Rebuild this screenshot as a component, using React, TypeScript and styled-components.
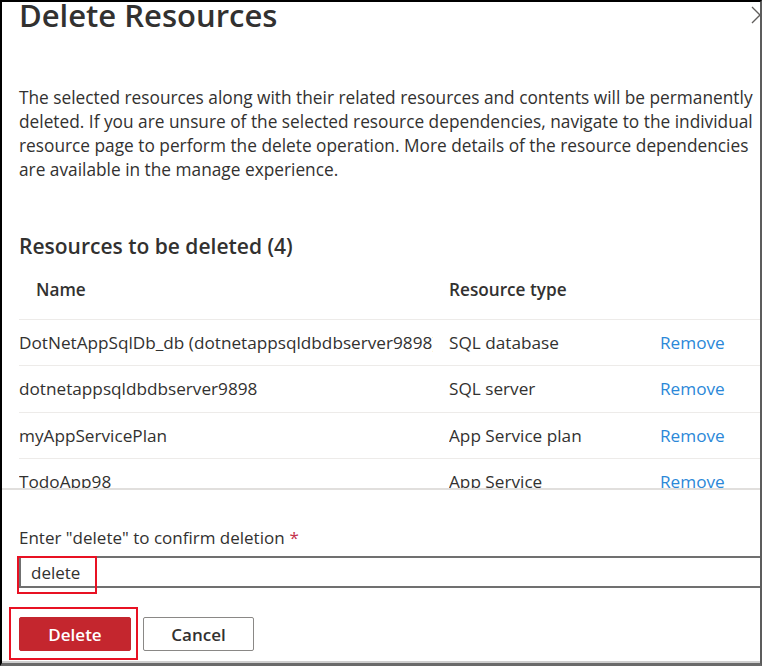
import React from "react";
import styled, { createGlobalStyle } from "styled-components";

const Global = createGlobalStyle`
  html, body { margin: 0; padding: 0; background: #fff; }
  body { font-family: "Open Sans", "Noto Sans", Arial, sans-serif; color: #323130; }
  * { box-sizing: border-box; }
`;

const Frame = styled.div`
  width: 762px;
  height: 666px;
  border-left: 2px solid #000;
  border-top: 2px solid #000;
  border-right: 2px solid #5c5c5c;
  border-bottom: 3px solid #6a6a6a;
  overflow: hidden;
  display: flex;
  flex-direction: column;
  background: #fff;
`;

const Content = styled.div`
  flex: 1 1 auto;
  min-height: 0;
  overflow: hidden;
  padding-left: 17px;
`;

const Header = styled.div`
  display: flex;
  justify-content: space-between;
  align-items: flex-start;
`;

const Title = styled.h1`
  margin: 0;
  font-size: 31px;
  line-height: 26px;
  font-weight: 600;
  color: #323130;
  white-space: nowrap;
`;

const CloseButton = styled.button`
  border: none;
  background: none;
  padding: 0;
  margin: 4px -9px 0 0;
  width: 18px;
  height: 18px;
  color: #605e5c;
  display: flex;
`;

const Description = styled.p`
  margin: 58px 0 0 0;
  font-size: 17.3px;
  line-height: 24px;
  color: #323130;
  white-space: nowrap;
`;

const SectionTitle = styled.h2`
  margin: 50px 0 0 0;
  font-size: 21px;
  line-height: 28px;
  font-weight: 600;
  white-space: nowrap;
`;

const TableRow = styled.div<{ $head?: boolean }>`
  display: grid;
  grid-template-columns: 414px 195px auto;
  column-gap: 16px;
  align-items: center;
  height: ${(p) => (p.$head ? "60px" : "46.33px")};
  border-bottom: 1px solid #edebe9;
  font-size: 17.2px;
  white-space: nowrap;
  font-weight: ${(p) => (p.$head ? 600 : 400)};
`;

const Cell = styled.div<{ $indent?: boolean }>`
  overflow: hidden;
  padding-left: ${(p) => (p.$indent ? "17px" : "0")};
`;

const RemoveLink = styled.a`
  color: #2b88d8;
  text-decoration: none;
`;

const Footer = styled.div`
  flex: 0 0 auto;
  border-top: 2px solid #e1dfdd;
  border-bottom: 2px solid #cfcfcf;
  padding: 37px 0 10px 17px;
  overflow: hidden;
`;

const Label = styled.label`
  display: block;
  font-size: 17px;
  line-height: 22px;
  color: #323130;
  white-space: nowrap;
`;

const Required = styled.span`
  color: #c4314b;
  margin-left: 5px;
`;

const InputWrap = styled.div`
  position: relative;
  margin-top: 7px;
  width: calc(100% + 20px);
  &::after {
    content: "";
    position: absolute;
    left: -2px;
    top: 0;
    width: 76px;
    height: 34px;
    border: 2.5px solid #e81123;
    pointer-events: none;
  }
`;

const TextInput = styled.input`
  display: block;
  width: 100%;
  height: 32px;
  border: 2px solid #707070;
  border-right: none;
  padding: 0 10px;
  font-family: inherit;
  font-size: 17px;
  color: #323130;
  outline: none;
  background: #fff;
`;

const Actions = styled.div`
  display: flex;
  gap: 12px;
  margin-top: 29px;
`;

const Marked = styled.div`
  position: relative;
  display: flex;
  &::after {
    content: "";
    position: absolute;
    left: -10px;
    top: -10px;
    right: -7px;
    bottom: -9px;
    border: 2.5px solid #e81123;
    pointer-events: none;
  }
`;

const Button = styled.button<{ $primary?: boolean }>`
  height: 34px;
  width: ${(p) => (p.$primary ? "112px" : "111px")};
  border-radius: 2px;
  font-family: inherit;
  font-size: 17px;
  font-weight: 600;
  cursor: pointer;
  background: ${(p) => (p.$primary ? "#c4262e" : "#fff")};
  color: ${(p) => (p.$primary ? "#fff" : "#323130")};
  border: 1px solid ${(p) => (p.$primary ? "#c4262e" : "#8a8886")};
`;

const rows = [
  { name: "DotNetAppSqlDb_db (dotnetappsqldbdbserver9898)", type: "SQL database" },
  { name: "dotnetappsqldbdbserver9898", type: "SQL server" },
  { name: "myAppServicePlan", type: "App Service plan" },
  { name: "TodoApp98", type: "App Service" },
];

export default function App() {
  return (
    <>
      <Global />
      <Frame>
        <Content>
          <Header>
            <Title>Delete Resources</Title>
            <CloseButton aria-label="Close">
              <svg width="18" height="18" viewBox="0 0 18 18">
                <path d="M1 1 L17 17 M17 1 L1 17" stroke="currentColor" strokeWidth="1.3" fill="none" />
              </svg>
            </CloseButton>
          </Header>
          <Description>
            The selected resources along with their related resources and contents will be permanently
            <br />
            deleted. If you are unsure of the selected resource dependencies, navigate to the individual
            <br />
            resource page to perform the delete operation. More details of the resource dependencies
            <br />
            are available in the manage experience.
          </Description>
          <SectionTitle>Resources to be deleted (4)</SectionTitle>
          <TableRow $head>
            <Cell $indent>Name</Cell>
            <Cell>Resource type</Cell>
            <Cell />
          </TableRow>
          {rows.map((r) => (
            <TableRow key={r.name}>
              <Cell>{r.name}</Cell>
              <Cell>{r.type}</Cell>
              <Cell>
                <RemoveLink href="#">Remove</RemoveLink>
              </Cell>
            </TableRow>
          ))}
        </Content>
        <Footer>
          <Label>
            Enter "delete" to confirm deletion<Required>*</Required>
          </Label>
          <InputWrap>
            <TextInput defaultValue="delete" />
          </InputWrap>
          <Actions>
            <Marked>
              <Button $primary>Delete</Button>
            </Marked>
            <Button>Cancel</Button>
          </Actions>
        </Footer>
      </Frame>
    </>
  );
}
